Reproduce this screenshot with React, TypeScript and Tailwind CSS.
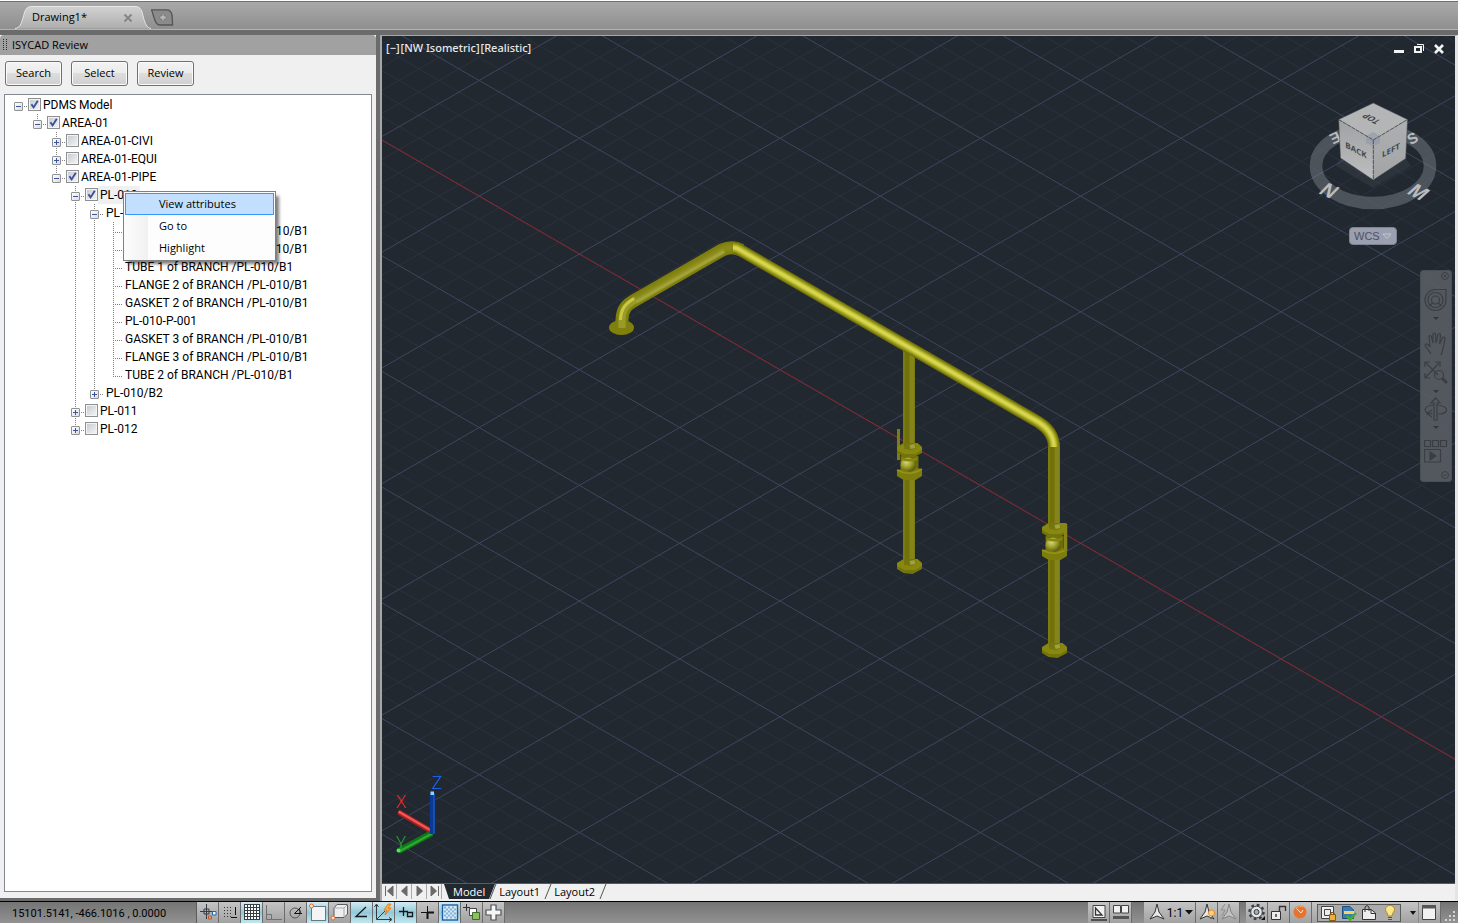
import { useState, type ReactNode } from "react";
import clsx from "clsx";

type Node = {
  id: string;
  label: string;
  checked?: boolean;
  open?: boolean;
  menu?: boolean;
  children?: Node[];
};

const leaves = [
  "FLANGE 1 of BRANCH /PL-010/B1",
  "GASKET 1 of BRANCH /PL-010/B1",
  "TUBE 1 of BRANCH /PL-010/B1",
  "FLANGE 2 of BRANCH /PL-010/B1",
  "GASKET 2 of BRANCH /PL-010/B1",
  "PL-010-P-001",
  "GASKET 3 of BRANCH /PL-010/B1",
  "FLANGE 3 of BRANCH /PL-010/B1",
  "TUBE 2 of BRANCH /PL-010/B1",
];

const model: Node = {
  id: "pdms",
  label: "PDMS Model",
  checked: true,
  open: true,
  children: [
    {
      id: "area",
      label: "AREA-01",
      checked: true,
      open: true,
      children: [
        { id: "civi", label: "AREA-01-CIVI", checked: false, children: [] },
        { id: "equi", label: "AREA-01-EQUI", checked: false, children: [] },
        {
          id: "pipe",
          label: "AREA-01-PIPE",
          checked: true,
          open: true,
          children: [
            {
              id: "pl010",
              label: "PL-010",
              checked: true,
              open: true,
              menu: true,
              children: [
                {
                  id: "b1",
                  label: "PL-010/B1",
                  open: true,
                  children: leaves.map((label) => ({ id: label, label })),
                },
                { id: "b2", label: "PL-010/B2", children: [] },
              ],
            },
            { id: "pl011", label: "PL-011", checked: false, children: [] },
            { id: "pl012", label: "PL-012", checked: false, children: [] },
          ],
        },
      ],
    },
  ],
};

function ContextMenu() {
  return (
    <div
      role="menu"
      className="absolute top-[5px] left-[25px] z-10 w-[153px] border border-[#808080] bg-[linear-gradient(90deg,#fcfcfc_0,#f1f1f1_24px,#fdfdfd_24px)] p-px font-['Open_Sans'] text-[11px] shadow-[4px_4px_3px_-1px_rgba(0,0,0,0.5)]"
    >
      {["View attributes", "Go to", "Highlight"].map((item, i) => (
        <button
          key={item}
          role="menuitem"
          className={clsx(
            "block h-[22px] w-full border pl-[33px] text-left",
            i === 0 ? "border-[#3399ff] bg-[#c2dfff]" : "border-transparent"
          )}
        >
          {item}
        </button>
      ))}
    </div>
  );
}

function TreeItem({ node, trail, last }: { node: Node; trail: boolean[]; last: boolean }) {
  const [open, setOpen] = useState(!!node.open);
  const [checked, setChecked] = useState(!!node.checked);
  const root = trail.length === 0;
  const hasBox = node.checked !== undefined;

  return (
    <li>
      <div className="flex h-[18px] items-start">
        {trail.map((more, i) => (
          <svg key={i} width="19" height="18" className="shrink-0">
            {more && <path d="M9.5 0V18" stroke="#808080" strokeDasharray="1 1" />}
          </svg>
        ))}
        <span className="relative h-[18px] w-[19px] shrink-0">
          <svg width="19" height="18" className="block" fill="none" stroke="#808080" strokeDasharray="1 1">
            {!root && <path d={last ? "M9.5 0V10" : "M9.5 0V18"} />}
            <path d="M9 10.5H18" />
          </svg>
          {node.children && (
            <button
              aria-label={(open ? "Collapse " : "Expand ") + node.label}
              onClick={() => setOpen(!open)}
              className="absolute top-[6px] left-[5px] size-[9px] rounded-[1px] border border-[#919191] bg-linear-to-br from-white to-[#dcdcdc]"
            >
              <svg width="7" height="7" className="block" stroke="#3a55a0">
                <path d={open ? "M1 3.5H6" : "M1 3.5H6M3.5 1V6"} />
              </svg>
            </button>
          )}
        </span>
        {hasBox && (
          <span className="relative mt-[2px] size-[13px] shrink-0">
            <input
              id={node.id}
              type="checkbox"
              checked={checked}
              onChange={() => setChecked(!checked)}
              className="peer block size-[13px] appearance-none border border-[#8e8f8f] bg-linear-to-br from-[#c4c9cf] to-[#f6f6f6] shadow-[inset_0_0_0_1px_#f4f4f4]"
            />
            <svg viewBox="0 0 13 13" className="pointer-events-none absolute inset-0 hidden peer-checked:block">
              <path d="M3.4 6.2L5.6 9.4L9.8 2.8" fill="none" stroke="#3b4f9c" strokeWidth="1.9" />
            </svg>
          </span>
        )}
        <span className="relative">
          <label
            htmlFor={hasBox ? node.id : undefined}
            className={clsx("block h-[18px] px-[2px] leading-[18px] whitespace-nowrap", node.menu && "bg-[#f0f0f0]")}
          >
            {node.label}
          </label>
          {node.menu && <ContextMenu />}
        </span>
      </div>
      {open && node.children && (
        <ul>
          {node.children.map((child, i) => (
            <TreeItem
              key={child.id}
              node={child}
              trail={[...trail, !last]}
              last={i === node.children!.length - 1}
            />
          ))}
        </ul>
      )}
    </li>
  );
}

function DrawingTabs() {
  return (
    <div className="flex h-[29px] shrink-0 items-end border-t border-b border-t-[#6f6f6f] border-b-[#b4b4b4] bg-linear-to-b from-[#a9a9a9] to-[#8f8f8f] pl-[15px]">
      <div className="relative h-[23px] w-[136px]">
        <svg width="136" height="23" className="absolute inset-0">
          <defs>
            <linearGradient id="tab" x2="0" y2="1">
              <stop offset="0" stopColor="#d2d2d2" />
              <stop offset="1" stopColor="#adadad" />
            </linearGradient>
          </defs>
          <path
            d="M0 22.5C5 22 6 18 8 12C10 4 11 .5 17 .5H120C126 .5 127 5 128 10C130 18 132 22 136 22.5"
            fill="url(#tab)"
            stroke="#e6e6e6"
          />
        </svg>
        <div className="relative flex h-full items-center pr-[18px] pl-[17px]">
          <button className="grow text-left">Drawing1*</button>
          <button aria-label="Close drawing">
            <svg width="10" height="10" stroke="#858585" strokeWidth="2">
              <path d="M1.5 1.5L8.5 8.5M8.5 1.5L1.5 8.5" />
            </svg>
          </button>
        </div>
      </div>
      <button aria-label="New drawing" className="mb-[3px]">
        <svg width="23" height="17" className="block">
          <path d="M.5 .8H16C21 1 21.500 6 21.500 16H9C4 16 3.500 9 .5 .8Z" fill="#8b8b8b" stroke="#555" strokeWidth="1.3" />
          <path d="M9 7H11V5H13V7H15V10H13V12H11V10H9Z" fill="#b9b9b9" stroke="#747474" strokeWidth=".6" />
        </svg>
      </button>
    </div>
  );
}

function ReviewPanel() {
  return (
    <aside className="mb-[3px] flex w-[376px] shrink-0 flex-col bg-[#f0f0f0] pb-[6px]">
      <h1 className="flex h-[20px] shrink-0 items-center rounded-t-[4px] bg-[#a1a1a1] pl-[3px]">
        <svg width="5" height="12" className="mr-[4px]">
          <path d="M.5 0V12M3.500 0V12" stroke="#2a2a2a" strokeDasharray="1 1" />
        </svg>
        ISYCAD Review
      </h1>
      <div className="flex gap-[9px] px-[5px] pt-[6px] pb-[8px]">
        {["Search", "Select", "Review"].map((name) => (
          <button
            key={name}
            className="h-[25px] w-[57px] rounded-[3px] border border-[#707070] bg-[linear-gradient(#f3f3f3_0,#ebebeb_50%,#dddddd_50%,#cfcfcf_100%)] shadow-[inset_0_0_0_1px_#fbfbfb]"
          >
            {name}
          </button>
        ))}
      </div>
      <ul className="mr-[4px] ml-[4px] grow border border-[#828790] bg-white pt-px pl-[4px] font-['Roboto'] text-[12px]">
        <TreeItem node={model} trail={[]} last />
      </ul>
    </aside>
  );
}

// Drafting grid: 30 degree isometric lines, every fifth one is a major line
const STEP = 200.5 / 5;
const SLOPE = 115.7 / 200.5;
const gridLines = Array.from({ length: 181 }, (_, i) => i - 90);

function Grid() {
  const line = (i: number, dir: number) => {
    const x = 579.4 + i * STEP;
    return `M${x - 3000} ${254 - dir * 3000 * SLOPE}L${x + 3000} ${254 + dir * 3000 * SLOPE}`;
  };
  const paths = (major: boolean) =>
    gridLines
      .filter((i) => (i % 5 === 0) === major)
      .map((i) => line(i, 1) + line(i, -1))
      .join("");
  return (
    <g fill="none">
      <path d={paths(false)} stroke="#2b323e" />
      <path d={paths(true)} stroke="#40465f" />
      <path d={line(0, 1)} stroke="#8b2229" />
    </g>
  );
}

const shade = ["#6e6e0c", "#85850f", "#9c9c20", "#b4b432", "#cbcb42", "#d8d850"];
const dullShade = ["#7d7d0c", "#80800f", "#838311", "#868613", "#898916", "#8b8b18"];

function Tube({ d, dull, width = 12 }: { d: string; dull?: boolean; width?: number }) {
  return (
    <g fill="none" strokeLinejoin="round">
      {(dull ? dullShade : shade).map((color, i) => (
        <path key={color} d={d} stroke={color} strokeWidth={width - i * 2} />
      ))}
    </g>
  );
}

function Post({ x, top, bottom }: { x: number; top: number; bottom: number }) {
  return (
    <g>
      <rect x={x - 6} y={top} width="12" height={bottom - top} fill="#7b7b0d" />
      <rect x={x - 4} y={top} width="4" height={bottom - top} fill="#71710b" />
      <rect x={x + 1} y={top} width="4" height={bottom - top} fill="#84841d" />
    </g>
  );
}

function Flange({ x, y }: { x: number; y: number }) {
  return (
    <g>
      <path d={`M${x - 12.5} ${y - 3}V${y + 3}L${x - 6} ${y + 7}L${x + 3} ${y + 8}L${x + 12.5} ${y + 3}V${y - 3}Z`} fill="#74740c" />
      <path d={`M${x - 12.500} ${y - 3}L${x - 6} ${y - 7}H${x + 8}L${x + 12.500} ${y - 3}V${y}L${x + 6} ${y + 4}L${x - 5} ${y + 4}L${x - 12.500} ${y}Z`} fill="#88880f" />
      <path d={`M${x - 6} ${y - 7}H${x + 5}L${x + 7} ${y - 2}L${x + 2} ${y}L${x - 5} ${y - 1}Z`} fill="#75750f" />
      <path d={`M${x} ${y - 5}L${x + 5} ${y - 6}L${x + 6} ${y - 2}L${x + 1} ${y - 1}Z`} fill="#a0a03c" />
    </g>
  );
}

function Valve({ x, y, handle }: { x: number; y: number; handle: "left" | "right" }) {
  return (
    <g>
      {handle === "left" && <path d={`M${x - 11} ${y - 36}V${y - 5}`} stroke="#7d7d12" strokeWidth="3" />}
      <rect x={x - 9} y={y - 9} width="18" height="14" fill="#6c6c0c" />
      <Flange x={x} y={y - 15} />
      <circle cx={x - 1.5} cy={y} r="7.500" fill="url(#ball)" />
      <path d={`M${x - 8} ${y - 8}Q${x} ${y - 4} ${x + 8} ${y - 8}V${y - 5}Q${x} ${y - 2} ${x - 8} ${y - 5}Z`} fill="#85850f" />
      <path d={`M${x - 12.5} ${y + 5}L${x - 6} ${y + 4}Q${x} ${y + 10} ${x + 7} ${y + 3}L${x + 12.5} ${y + 4}V${y + 11}L${x + 6} ${y + 15}H${x - 6}L${x - 12.5} ${y + 11}Z`} fill="#7d7d0d" />
      <path d={`M${x - 12.5} ${y + 5}Q${x} ${y + 12} ${x + 12.5} ${y + 4}`} stroke="#94941a" fill="none" strokeWidth="1.5" />
      {handle === "right" && (
        <>
          <path d={`M${x + 11} ${y - 21}V${y + 6}`} stroke="#86861a" strokeWidth="3.500" />
          <path d={`M${x + 6} ${y - 21}H${x + 12}`} stroke="#86861a" strokeWidth="2" />
        </>
      )}
    </g>
  );
}

function ViewCube() {
  return (
    <g>
      <ellipse cx="1373" cy="166" rx="57" ry="37" fill="none" stroke="#8a9099" strokeOpacity=".42" strokeWidth="12.5" />
      <g fill="#b9bcbf" fontWeight="700" fontSize="20" textAnchor="middle" className="font-['Liberation_Sans']">
        <text transform="translate(1324 196) rotate(24) skewX(-20)">N</text>
        <text transform="translate(1413 197) rotate(28) skewX(-20)">M</text>
        <text fontSize="15" transform="translate(1333 133) rotate(155)">E</text>
        <text fontSize="15" transform="translate(1415 143) rotate(-28)">S</text>
      </g>
      <path d="M1340.500 158L1373.300 181L1405.700 158L1411 166L1373 188L1336 166Z" fill="#7b828a" opacity=".12" />
      <path d="M1373.300 103L1407.500 119.500L1373.300 140L1338.700 119.500Z" fill="#b3b5b6" />
      <path d="M1338.700 119.500L1373.300 140V180L1340.500 158Z" fill="url(#cubeLeft)" />
      <path d="M1407.500 119.500L1373.300 140V180L1405.700 158.500Z" fill="url(#cubeRight)" />
      <path d="M1366 136L1373 132L1380 136V143L1373 146L1366 143Z" fill="#8c96a6" opacity=".55" />
      <g fill="none" stroke="#4b5056" strokeWidth=".9">
        <path d="M1338.700 119.500L1373.300 140L1407.500 119.500M1373.300 140V180" strokeDasharray="4 1" />
        <path d="M1373.300 103L1407.500 119.500L1405.700 158.500L1373.300 180L1340.500 158L1338.700 119.500Z" opacity=".6" />
      </g>
      <g fill="#43484d" fontWeight="700" fontSize="8" textAnchor="middle" className="font-['Open_Sans']">
        <text transform="translate(1356 153) skewY(28)">BACK</text>
        <text transform="translate(1391 153) skewY(-28)">LEFT</text>
        <text transform="translate(1374 117) rotate(208) skewX(-30)">TOP</text>
      </g>
    </g>
  );
}

function AxisIcon() {
  return (
    <g>
      <path d="M431 831L398.500 812" stroke="#a82020" strokeWidth="5" />
      <path d="M431 830.500L398.500 811.500" stroke="#f25656" strokeWidth="2.500" />
      <path d="M432 833L398.500 851" stroke="#0b7a12" strokeWidth="6" />
      <path d="M432 833.500L399 851.500" stroke="#35a53a" strokeWidth="2" />
      <circle cx="398.500" cy="850.500" r="2" fill="#57e05c" />
      <path d="M432.300 834V793" stroke="#0a3a94" strokeWidth="5" />
      <path d="M434 834V793" stroke="#1a56c0" strokeWidth="1.500" />
      <rect x="430.500" y="791.500" width="3.500" height="3.500" fill="#8ad4ff" />
      <g fontSize="18" fontWeight="300" textAnchor="middle" className="font-['Open_Sans']">
        <text x="437" y="789" fill="#1c6dff">Z</text>
        <text x="401" y="808" fill="#ff2b2b">X</text>
        <text x="401" y="849" fill="#27b52c">Y</text>
      </g>
    </g>
  );
}

function Scene() {
  return (
    <svg className="absolute inset-0 size-full" aria-hidden="true">
      <defs>
        <radialGradient id="ball" cx=".4" cy=".3" r=".7">
          <stop offset="0" stopColor="#d8d880" />
          <stop offset=".5" stopColor="#a0a02c" />
          <stop offset="1" stopColor="#55550a" />
        </radialGradient>
        <linearGradient id="cubeLeft" x2="0" y2="1">
          <stop offset="0" stopColor="#9fa1a3" />
          <stop offset="1" stopColor="#bcbebf" />
        </linearGradient>
        <linearGradient id="cubeRight" x2="0" y2="1">
          <stop offset="0" stopColor="#adafb0" />
          <stop offset="1" stopColor="#a2a4a6" />
        </linearGradient>
      </defs>
      <g transform="translate(-382 -36)">
        <Grid />
        <Post x={909} top={350} bottom={562} />
        <Flange x={909.5} y={566} />
        <Valve x={909.5} y={465} handle="left" />
        <Post x={1054} top={443} bottom={646} />
        <Flange x={1054.5} y={650} />
        <Valve x={1054.5} y={545} handle="right" />
        <ellipse cx="621.500" cy="327.500" rx="12.500" ry="7.500" fill="#80800c" />
        <Tube d="M622 328V319C622.500 309 626 305 636 299.500L722 250Q732 245.500 741 250" dull width={13} />
        <path d="M622 328V319C622.500 309 626 305 636 299.500" stroke="#9a9a28" strokeWidth="7" fill="none" />
        <path d="M620.500 320C621 309 625 304 634 298.500" stroke="#c8c844" strokeWidth="3" fill="none" />
        <path d="M636 301.500L724 251" stroke="#94942a" strokeWidth="5" />
        <path d="M636 302L724 251.500" stroke="#a3a33c" strokeWidth="2.500" />
        <Tube d="M733 247.500Q737 247.500 741 250.500L1034 419.500Q1054 430 1054 447" width={12} />
      </g>
    </svg>
  );
}

function NavBar() {
  const items: { name: string; height: string; icon: ReactNode; arrow?: boolean }[] = [
    {
      name: "Steering wheel",
      height: "h-[44px]",
      arrow: true,
      icon: (
        <>
          <path d="M22 1.500V12A10.500 10.500 0 1 1 11.500 1.500Z" />
          <circle cx="11.500" cy="12" r="7.500" />
          <circle cx="11.500" cy="12" r="4" />
          <path d="M8.500 15L5.500 18M14.500 15L17.500 18" />
        </>
      ),
    },
    {
      name: "Pan",
      height: "h-[29px]",
      icon: (
        <path d="M7 22C5 18 2 16 1 13C2 11 4 12 6 15L5 5C5 3 7 3 7.500 5L9 11L9 2.500C9 .5 11.500 .5 11.500 2.500L12 11L14 3C14.500 1 17 1.500 16.500 4L15.500 12L18.500 6C19.500 4.500 21.500 5.500 21 7C20 12 19 18 17 23" />
      ),
    },
    {
      name: "Zoom",
      height: "h-[36px]",
      arrow: true,
      icon: (
        <>
          <path d="M2 2L14 14M15 2L2 16M1 6V1H6M11 1H16V6M1 12V17H6" />
          <circle cx="15" cy="14" r="4.500" />
          <path d="M18 17L23 22" strokeWidth="3" />
        </>
      ),
    },
    {
      name: "Orbit",
      height: "h-[42px]",
      arrow: true,
      icon: (
        <>
          <path d="M10 23V6H7L11.500 1L16 6H13V23Z" />
          <path d="M10 8C-2 9 -1 16 8 17M13 8C26 9 25 17 14 17M8 13L3 17L8 20" />
        </>
      ),
    },
    {
      name: "Show motion",
      height: "h-[28px]",
      icon: (
        <>
          <path d="M.5 1.500H6.500V7.500H.5ZM8.500 1.500H14.500V7.500H8.500ZM16.500 1.500H22.500V7.500H16.500ZM.5 10.500H16.500V23H.5Z" />
          <path d="M6 13L12 17L6 21Z" fill="#3a3e44" />
        </>
      ),
    },
  ];
  return (
    <nav className="absolute top-[234px] right-[3px] flex h-[212px] w-[32px] flex-col items-center rounded-[3px] border border-[#4b5056] bg-[#5c6066]/85 pt-[17px]">
      <svg width="8" height="8" className="absolute top-[1px] right-[2px]" stroke="#3c4046" fill="none">
        <circle cx="4" cy="4" r="3.500" />
        <path d="M2.500 2.500L5.500 5.500M5.500 2.500L2.500 5.500" />
      </svg>
      {items.map((item) => (
        <button key={item.name} aria-label={item.name} className={clsx("flex shrink-0 flex-col items-center", item.height)}>
          <svg width="24" height="24" fill="none" stroke="#3a3e44" strokeWidth="1.200" className="shrink-0">
            {item.icon}
          </svg>
          {item.arrow && (
            <svg width="6" height="4" className="mt-[5px] shrink-0">
              <path d="M0 0H6L3 3Z" fill="#33373c" />
            </svg>
          )}
        </button>
      ))}
      <svg width="8" height="8" className="absolute right-[2px] bottom-[2px]" stroke="#3c4046" fill="none">
        <circle cx="4" cy="4" r="3.500" />
        <path d="M2 4H6" />
      </svg>
    </nav>
  );
}

function Viewport() {
  return (
    <main className="relative grow overflow-hidden bg-[#212830] font-['Noto_Sans']">
      <Scene />
      <div className="absolute top-[4px] left-[4px] flex gap-px text-[11px] leading-4 font-medium text-[#e8e8e8]">
        <button>[−]</button>
        <button>[NW Isometric]</button>
        <button>[Realistic]</button>
      </div>
      <div className="absolute top-[7px] right-[10px] flex gap-[8px]">
        <button aria-label="Minimize">
          <svg width="12" height="12"><rect x="1" y="7" width="10" height="3" fill="#f2f2f2" /></svg>
        </button>
        <button aria-label="Restore">
          <svg width="12" height="12" fill="none" stroke="#f2f2f2">
            <path d="M4 1.500H10.500V8" />
            <rect x="2" y="4" width="6" height="5" strokeWidth="2" />
          </svg>
        </button>
        <button aria-label="Close viewport">
          <svg width="12" height="12" stroke="#f2f2f2" strokeWidth="2.600"><path d="M2 2L10 10M10 2L2 10" /></svg>
        </button>
      </div>
      <svg width="140" height="120" viewBox="1303 95 140 120" className="absolute top-[59px] right-[12px]" aria-hidden="true">
        <ViewCube />
      </svg>
      <button className="absolute top-[191px] right-[58px] flex h-[18px] w-[48px] items-center justify-between rounded-[4px] border border-[#7e8394] bg-[#9b9fb0] px-[4px] font-['Liberation_Sans'] text-[11px] text-[#4d5160]">
        WCS
        <svg width="10" height="7" fill="none" stroke="#c4c8d4"><path d="M1 1H9L5 5.500Z" /></svg>
      </button>
      <NavBar />
      <svg width="60" height="90" viewBox="392 770 60 90" className="absolute bottom-[23px] left-[10px]" aria-hidden="true">
        <AxisIcon />
      </svg>
    </main>
  );
}

function Slash({ dark }: { dark?: boolean }) {
  return (
    <svg width="11" height="16" className="shrink-0">
      {dark && <path d="M0 0H7L1 15H0Z" fill="#212830" />}
      <path d="M8 0L2 15" stroke="#555" fill="none" />
    </svg>
  );
}

function LayoutTabs() {
  const arrows = [
    ["First", "M3.500 2V12M11 2L5.500 7L11 12Z"],
    ["Previous", "M10 2L4.500 7L10 12Z"],
    ["Next", "M5 2L10.500 7L5 12Z"],
    ["Last", "M11.500 2V12M4 2L9.500 7L4 12Z"],
  ];
  return (
    <div className="flex h-[18px] shrink-0 items-start border-t border-[#5a5a5a] bg-[#f0f0f0]">
      {arrows.map(([name, d]) => (
        <button key={name} aria-label={name + " layout"} className="border-r border-[#a9a9a9]">
          <svg width="14" height="15" className="block" fill="#6a6a6a" stroke="#6a6a6a">
            <path d={d} />
          </svg>
        </button>
      ))}
      <svg width="8" height="16"><path d="M2 0H8V15H7Z" fill="#212830" /></svg>
      <button className="h-[15px] bg-[#212830] px-[3px] leading-[16px] text-white">Model</button>
      <Slash dark />
      <button className="h-[15px] pr-[3px] leading-[16px]">Layout1</button>
      <Slash />
      <button className="h-[15px] pr-[3px] leading-[16px]">Layout2</button>
      <Slash />
    </div>
  );
}

const modes: { name: string; on?: boolean; icon: ReactNode }[] = [
  {
    name: "Infer constraints",
    icon: (
      <>
        <path d="M3 9.500H17M9.500 2V17M7 7H12V12H7Z" stroke="#333b44" />
        <path d="M14.500 14V17H11.500V14ZM17.500 13V9.500" stroke="#c25a26" />
        <path d="M15.500 9.500H19V13H15.500Z" fill="#fff" stroke="#2468a8" />
      </>
    ),
  },
  {
    name: "Snap mode",
    icon: (
      <>
        <path d="M5 5.500H14M5 8.500H14M5 11.500H14M5 14.500H14" stroke="#333" strokeDasharray="1 2" />
        <path d="M16.500 5V14M12 15.500H18" stroke="#111" strokeDasharray="8 1" />
      </>
    ),
  },
  {
    name: "Grid display",
    on: true,
    icon: (
      <>
        <rect x="3" y="2" width="16" height="16" fill="#fff" />
        <path d="M3.500 2V18M6.500 2V18M9.500 2V18M12.500 2V18M15.500 2V18M18.500 2V18M3 2.500H19M3 5.500H19M3 8.500H19M3 11.500H19M3 14.500H19M3 17.500H19" stroke="#3a3f44" />
      </>
    ),
  },
  { name: "Ortho mode", icon: <path d="M3.500 3V17.500H19M3.500 12.500H8.500V17" stroke="#6f7275" /> },
  {
    name: "Polar tracking",
    icon: (
      <>
        <circle cx="10" cy="11" r="5" stroke="#555" />
        <path d="M16 5L9.500 11.500H17M14 7Q16 9 15 12" stroke="#111" />
      </>
    ),
  },
  {
    name: "Object snap",
    on: true,
    icon: (
      <>
        <rect x="4.500" y="4.500" width="14" height="14" fill="#f4f4f4" stroke="#6b7780" />
        <circle cx="4.500" cy="4" r="2" fill="#ffe9d8" stroke="#e06a2a" />
      </>
    ),
  },
  {
    name: "3D object snap",
    icon: (
      <>
        <path d="M5 6L8 2.500H18.500V12L15 15.500H5Z" fill="#eee" stroke="#555d66" />
        <path d="M5 6H15V15M15 6L18.500 2.500" stroke="#a5abb2" />
        <circle cx="4" cy="16" r="2" fill="#ffe9d8" stroke="#e06a2a" />
      </>
    ),
  },
  { name: "Object snap tracking", on: true, icon: <path d="M15 5L5 14.500H16" stroke="#15191c" strokeWidth="1.300" /> },
  {
    name: "Dynamic UCS",
    on: true,
    icon: (
      <>
        <path d="M3.500 3V17.500H18M1.500 5L3.500 2L5.500 5M16 15.500L19 17.500L16 19.500M4 17L12 9" stroke="#2f3a42" />
        <path d="M15 2L11 8H14L12 13L18 6H15L18 2Z" fill="#ffb52e" stroke="#e2701a" strokeWidth=".8" />
      </>
    ),
  },
  { name: "Dynamic input", on: true, icon: <path d="M4 9.500H13M8.500 5V14M12.500 10.500H17.500V14.500H12.500Z" stroke="#15191c" strokeWidth="1.300" /> },
  {
    name: "Lineweight",
    icon: (
      <>
        <path d="M4 10.500H11M10.500 4V10" stroke="#111" />
        <path d="M10 10.500H17M10.500 10V17" stroke="#111" strokeWidth="2" />
      </>
    ),
  },
  {
    name: "Transparency",
    on: true,
    icon: (
      <>
        <rect x="3.500" y="3" width="15" height="15" fill="#dcecf6" stroke="#1d5ea8" strokeWidth="1.400" />
        <path d="M5 5.500H17M5 9.500H17M5 13.500H17" stroke="#7fb2d8" strokeWidth="2" strokeDasharray="2 2" />
        <path d="M7 7.500H17M7 11.500H17M7 15.500H17" stroke="#7fb2d8" strokeWidth="2" strokeDasharray="2 2" />
      </>
    ),
  },
  {
    name: "Quick properties",
    icon: (
      <>
        <path d="M2 5.500H9M5.500 2V9" stroke="#333" />
        <path d="M8.500 6.500H15.500V13.500H8.500Z" fill="#fff" stroke="#444" />
        <path d="M11.500 10.500H18.500V17.500H11.500Z" fill="#8fc060" stroke="#3f6e2a" />
      </>
    ),
  },
  {
    name: "Selection cycling",
    icon: <path d="M8 3H13V8H18V13H13V18H8V13H3V8H8Z" fill="#f5f5f5" stroke="#4c5258" strokeWidth="1.200" />,
  },
];

const plane = "M11 2L13 10L18 17L11 14L4 17L9 10Z";

function StatusButton({ name, on, wide, children }: { name: string; on?: boolean; wide?: boolean; children: ReactNode }) {
  return (
    <button
      aria-label={name}
      aria-pressed={on}
      className={clsx(
        "flex h-full shrink-0 items-center justify-center border-r border-[#6c6c6c]",
        wide ? "w-[52px]" : "w-[22px]",
        on ? "bg-linear-to-b from-[#d3eaf1] via-[#93c9da] to-[#c3e6ee]" : "bg-linear-to-b from-[#c4c4c4] to-[#a2a2a2]"
      )}
    >
      {children}
    </button>
  );
}

function Glyph({ children }: { children: ReactNode }) {
  return (
    <svg width="21" height="21" fill="none" className="shrink-0">
      {children}
    </svg>
  );
}

function StatusBar() {
  return (
    <footer className="flex h-[22px] shrink-0 items-stretch border-t border-black bg-linear-to-b from-[#747474] to-[#929292]">
      <output className="w-[197px] shrink-0 border-r border-[#5c5c5c] pl-[12px] font-['Roboto'] text-[11px] leading-[23px] whitespace-pre">
        15101.5141, -466.1016 , 0.0000
      </output>
      {modes.map((mode) => (
        <StatusButton key={mode.name} name={mode.name} on={mode.on}>
          <Glyph>{mode.icon}</Glyph>
        </StatusButton>
      ))}
      <div className="ml-auto flex">
        <StatusButton name="Model space">
          <Glyph>
            <path d="M5 3.500H17V15.500H5Z" fill="#f0f0f0" stroke="#444" />
            <path d="M7.500 6V13H14ZM3 18H19" stroke="#333" strokeWidth="1.300" />
          </Glyph>
        </StatusButton>
        <StatusButton name="Quick view layouts">
          <Glyph>
            <path d="M3.500 3.500H10.500V11H3.500ZM11.500 3.500H18.500V11H11.500Z" fill="#f0f0f0" stroke="#444" />
            <path d="M3 14H19V17H3Z" fill="#555" />
          </Glyph>
        </StatusButton>
      </div>
      <div className="ml-[12px] flex">
        <StatusButton name="Annotation scale" wide>
          <Glyph><path d={plane} fill="#e8e8e8" stroke="#333" /></Glyph>
          <span className="font-['Roboto'] text-[12px]">1:1</span>
          <svg width="8" height="5" className="ml-[2px]"><path d="M0 0H8L4 4.500Z" fill="#111" /></svg>
        </StatusButton>
        <StatusButton name="Annotation visibility">
          <Glyph>
            <path d={plane} fill="#e8e8e8" stroke="#333" />
            <circle cx="15.500" cy="11" r="3" fill="#ffd37a" stroke="#e8862a" />
            <path d="M14 16H17" stroke="#666" strokeWidth="2" />
          </Glyph>
        </StatusButton>
        <StatusButton name="Add scales automatically">
          <Glyph>
            <path d={plane} fill="#c2c2c2" stroke="#848484" />
            <path d="M7 2L3 8H7L4 14" stroke="#8d8d8d" />
          </Glyph>
        </StatusButton>
      </div>
      <div className="ml-[6px] flex">
        <StatusButton name="Workspace switching">
          <Glyph>
            <circle cx="10.500" cy="10" r="7" stroke="#3c4044" strokeWidth="2.500" strokeDasharray="2.700 2.800" />
            <circle cx="10.500" cy="10" r="5.800" fill="#e4e4e4" stroke="#3c4044" />
            <circle cx="10.500" cy="10" r="2.500" fill="#aaa" stroke="#3c4044" />
            <path d="M19 14V18H15Z" fill="#111" />
          </Glyph>
        </StatusButton>
        <StatusButton name="Lock toolbars">
          <Glyph>
            <path d="M3.500 9.500H12.500V17.500H3.500Z" fill="#ececec" stroke="#333" />
            <path d="M11.500 9V4.500H17.500V9M8 12V15" stroke="#333" strokeWidth="1.400" />
          </Glyph>
        </StatusButton>
        <StatusButton name="Hardware acceleration">
          <Glyph>
            <circle cx="10" cy="10" r="6.500" fill="#e9722e" />
            <path d="M6 6Q9 3 13 5" stroke="#f6a26a" />
            <path d="M11 11L6.500 6.500M11 11L13 8" stroke="#ffe3cc" />
          </Glyph>
        </StatusButton>
      </div>
      <div className="flex bg-linear-to-b from-[#c4c4c4] to-[#a2a2a2] pl-[5px]">
        <div className="flex h-[18px] w-[84px] items-center justify-around self-center border border-[#5b5b5b] bg-[#ababab]">
          <svg width="18" height="18" fill="none">
            <path d="M2.500 2.500H14.500V14.500H2.500Z" fill="#eee" stroke="#444" />
            <path d="M5.500 5.500H11.500V11.500H5.500Z" stroke="#444" />
            <path d="M10.500 10.500H16.500V16.500H10.500Z" fill="#e7b13c" stroke="#8a5a12" />
            <path d="M12 10V8.500H15V10" stroke="#7a5514" />
          </svg>
          <svg width="18" height="18" fill="none">
            <path d="M2.500 2.500H10L13.500 6V14.500H2.500Z" fill="#3a7cb4" stroke="#1e4f7c" />
            <path d="M4 7H14V10H4Z" fill="#f2d466" />
            <path d="M7 12L10 15.500L16 9" stroke="#41b02a" strokeWidth="2.500" />
          </svg>
          <svg width="18" height="18" fill="none">
            <path d="M2.500 5.500H11L15.500 9V15.500H2.500Z" fill="#eee" stroke="#333" />
            <path d="M11 5.500V9.500H15M5 8V3Q7 0 9 3V7" stroke="#333" />
          </svg>
          <svg width="18" height="18" fill="none">
            <path d="M7 12C7 9 4.500 8 4.500 5.500C4.500 0 13.500 0 13.500 5.500C13.500 8 11 9 11 12Z" fill="#fce68a" stroke="#b28a22" />
            <path d="M7 13.500H11M7 15.500H11" stroke="#555" />
          </svg>
        </div>
        <button aria-label="Status bar menu" className="flex w-[18px] items-center justify-end border-r border-[#8a8a8a] pr-[2px]">
          <svg width="6" height="4"><path d="M0 0H6L3 4Z" fill="#111" /></svg>
        </button>
        <StatusButton name="Clean screen">
          <Glyph>
            <path d="M3.500 3.500H16.500V17.500H3.500Z" fill="#f2f2f2" stroke="#444" />
            <path d="M3 3H17V6.500H3Z" fill="#555" />
          </Glyph>
        </StatusButton>
      </div>
      <svg width="17" height="21" className="shrink-0" stroke="#d4d4d4" strokeWidth="2">
        <path d="M12 10H14M8 14H10M12 14H14M4 18H6M8 18H10M12 18H14" />
      </svg>
    </footer>
  );
}

export default function App() {
  return (
    <div className="flex h-screen flex-col bg-white pt-px font-['Open_Sans',sans-serif] text-[11px] text-black select-none">
      <DrawingTabs />
      <div className="flex min-h-0 grow bg-[#6b6b6b] pt-[5px]">
        <ReviewPanel />
        <div className="ml-[4px] flex min-w-0 grow flex-col border-t border-r-[3px] border-l-2 border-t-[#a6a6a6] border-r-[#e4e4e4] border-l-[#a6a6a6]">
          <Viewport />
          <LayoutTabs />
        </div>
      </div>
      <StatusBar />
    </div>
  );
}
